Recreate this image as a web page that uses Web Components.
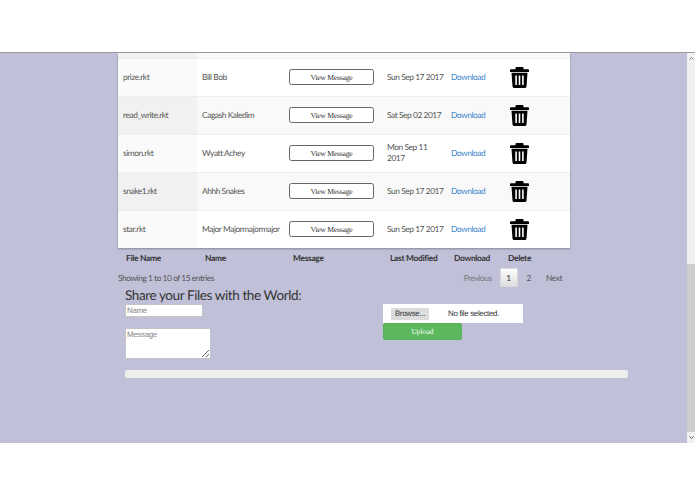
<!DOCTYPE html>
<html>
<head>
<meta charset="utf-8">
<title>Files</title>
<style>
  html, body { margin: 0; height: 100%; background: #fff; overflow: hidden; }
  body { font-family: Lato, "Open Sans", sans-serif; text-rendering: geometricPrecision; }
</style>
</head>
<body>
<app-shell>
  <file-table>
    <file-row slot="row" odd><span slot="file">prize.rkt</span><span slot="owner">Bill Bob</span><span slot="date">Sun Sep 17 2017</span></file-row>
    <file-row slot="row"><span slot="file">read_write.rkt</span><span slot="owner">Cagash Kaledim</span><span slot="date">Sat Sep 02 2017</span></file-row>
    <file-row slot="row" odd><span slot="file">simon.rkt</span><span slot="owner">Wyatt Achey</span><span slot="date">Mon Sep 11<br>2017</span></file-row>
    <file-row slot="row"><span slot="file">snake1.rkt</span><span slot="owner">Ahhh Snakes</span><span slot="date">Sun Sep 17 2017</span></file-row>
    <file-row slot="row" odd><span slot="file">star.rkt</span><span slot="owner">Major Majormajormajor</span><span slot="date">Sun Sep 17 2017</span></file-row>
  </file-table>
  <upload-form></upload-form>
</app-shell>

<script>
// columns are shared by the rows and the footer
const COLUMNS = '79px 88px 97px 64px 59px 65px';

const rowTemplate = document.createElement('template');
rowTemplate.innerHTML = `
  <style>
  :host {
    display: grid;
    grid-template-columns: ${COLUMNS};
    height: 38px;
    box-sizing: border-box;
    border-top: 1px solid #eeeeee;
    background: #f9f9f9;
    --first: #f1f1f1;
    font-size: 8.4px;
    letter-spacing: -.44px;
    line-height: 11px;
    color: #555;
  }
  :host([odd]) {
    background: #fff;
    --first: #fafafa;
  }
  .cell {
    display: flex;
    align-items: center;
    padding: 0 5px 1px;
  }
  .owner, .date { padding-right: 0; white-space: nowrap; }
  .msg { padding-left: 4px; }
  .file { background: var(--first); }
  button {
    width: 85px;
    height: 16px;
    padding: 0;
    flex: none;
    box-sizing: border-box;
    border: 1px solid #666;
    border-radius: 2.5px;
    background: #fff;
    color: #333;
    font: 7.7px "Liberation Serif", serif;
    letter-spacing: -.25px;
    text-rendering: geometricPrecision;
  }
  a { color: #3a85cc; text-decoration: none; }
  svg { display: block; width: 19px; height: 21px; flex: none; margin-top: 1px; }
  </style>
  <div class="cell file"><slot name="file"></slot></div>
  <div class="cell owner"><slot name="owner"></slot></div>
  <div class="cell msg"><button>View Message</button></div>
  <div class="cell date"><slot name="date"></slot></div>
  <div class="cell"><a href="#">Download</a></div>
  <div class="cell">
    <svg viewBox="0 0 19 21">
      <path fill="#000" d="M6.5 0h6a1 1 0 0 1 1 1v1.2h4.5a1 1 0 0 1 1 1V5H0V3.2a1 1 0 0 1 1-1h4.500V1a1 1 0 0 1 1-1z"/>
      <path fill="#000" fill-rule="evenodd" d="M1.500 5.800h16l-1 13.700a1.600 1.600 0 0 1-1.600 1.500H4.100a1.600 1.600 0 0 1-1.600-1.500zM5.300 8.500v9.500h1.600v-9.500zM8.700 8.500v9.500h1.600v-9.500zM12.100 8.500v9.500h1.600v-9.500z"/>
    </svg>
  </div>
`;

class FileRow extends HTMLElement {
  constructor () {
    super();
    this.attachShadow({mode: 'open'}).appendChild(rowTemplate.content.cloneNode(true));
  }
}
customElements.define('file-row', FileRow);

const tableTemplate = document.createElement('template');
tableTemplate.innerHTML = `
  <style>
  :host {
    display: block;
    width: 452px;
    margin-left: 118px;
  }
  .body {
    background: #fff;
    box-shadow: 0 1px 2px rgba(0, 0, 0, .3);
  }
  .sliver { height: 5px; display: flex; background: #f9f9f9; }
  .sliver div { width: 79px; background: #f1f1f1; }
  .foot {
    display: grid;
    grid-template-columns: ${COLUMNS};
    height: 20px;
    align-items: center;
    font-size: 8.4px;
    letter-spacing: -.3px;
    font-weight: 700;
    color: #333;
    white-space: nowrap;
  }
  .foot span { padding-left: 8px; }
  .foot .del { padding-left: 3px; }
  .info {
    display: flex;
    justify-content: space-between;
    align-items: center;
    height: 19px;
    font-size: 8.4px;
    letter-spacing: -.45px;
    color: #555;
  }
  </style>
  <div class="body">
    <div class="sliver"><div></div></div>
    <slot name="row"></slot>
  </div>
  <div class="foot">
    <span>File Name</span><span>Name</span><span>Message</span><span>Last Modified</span><span>Download</span><span class="del">Delete</span>
  </div>
  <div class="info">
    <span>Showing 1 to 10 of 15 entries</span>
    <data-pager></data-pager>
  </div>
`;

class FileTable extends HTMLElement {
  constructor () {
    super();
    this.attachShadow({mode: 'open'}).appendChild(tableTemplate.content.cloneNode(true));
  }
}
customElements.define('file-table', FileTable);

const pagerTemplate = document.createElement('template');
pagerTemplate.innerHTML = `
  <style>
  :host {
    display: flex;
    align-items: center;
    font-size: 8.4px;
    color: #555;
    padding-right: 8px;
  }
  .off { color: #777; margin-right: 8px; }
  .on {
    display: flex;
    align-items: center;
    justify-content: center;
    width: 18px;
    height: 19px;
    box-sizing: border-box;
    border: 1px solid #d8d8d8;
    background: linear-gradient(#fff, #dcdcdc);
    color: #333;
  }
  .n { margin: 0 15px 0 9px; }
  </style>
  <span class="off">Previous</span><span class="on">1</span><span class="n">2</span><span>Next</span>
`;

class DataPager extends HTMLElement {
  constructor () {
    super();
    this.attachShadow({mode: 'open'}).appendChild(pagerTemplate.content.cloneNode(true));
  }
}
customElements.define('data-pager', DataPager);

const formTemplate = document.createElement('template');
formTemplate.innerHTML = `
  <style>
  :host {
    display: block;
    margin-left: 125px;
    width: 503px;
  }
  h2 {
    margin: 0;
    font-size: 13.5px;
    letter-spacing: -.4px;
    line-height: 16px;
    font-weight: 400;
    color: #333;
  }
  .cols { display: flex; }
  .left { width: 258px; }
  input, textarea {
    display: block;
    box-sizing: border-box;
    margin: 0;
    padding: 1px;
    border: 1px solid #c4c4c4;
    background: #fff;
    font: 7.9px "Liberation Sans", sans-serif;
    letter-spacing: -.3px;
    text-rendering: geometricPrecision;
  }
  input::placeholder, textarea::placeholder { color: #888; }
  input { width: 78px; height: 13px; margin-top: 1px; }
  textarea { width: 86px; height: 31px; margin-top: 11px; }
  .file {
    display: flex;
    align-items: center;
    width: 140px;
    height: 19px;
    margin-top: 17px;
    box-sizing: border-box;
    padding-left: 8px;
    background: #fff;
    font: 7.9px "Liberation Sans", sans-serif;
    letter-spacing: -.3px;
    color: #333;
  }
  .browse {
    width: 38px;
    height: 12px;
    line-height: 12px;
    text-align: center;
    background: #dcdcdc;
    margin-right: 19px;
  }
  .upload {
    display: block;
    width: 79px;
    height: 17px;
    padding: 0;
    border: 1px solid #58b358;
    border-radius: 2px;
    background: #5cb85c;
    color: #fff;
    font: 7.5px "Liberation Serif", serif;
    text-rendering: geometricPrecision;
  }
  .progress {
    height: 8px;
    margin-top: 11px;
    border-radius: 2px;
    background: #eeeeee;
  }
  </style>
  <div class="cols">
    <div class="left">
      <h2>Share your Files with the World:</h2>
      <input placeholder="Name">
      <textarea placeholder="Message"></textarea>
    </div>
    <div>
      <div class="file"><span class="browse">Browse...</span><span>No file selected.</span></div>
      <button class="upload">Upload</button>
    </div>
  </div>
  <div class="progress"></div>
`;

class UploadForm extends HTMLElement {
  constructor () {
    super();
    this.attachShadow({mode: 'open'}).appendChild(formTemplate.content.cloneNode(true));
  }
}
customElements.define('upload-form', UploadForm);

const shellTemplate = document.createElement('template');
shellTemplate.innerHTML = `
  <style>
  :host {
    display: flex;
    flex-direction: column;
    height: 494px;
  }
  .band { height: 52px; background: #fff; flex: none; }
  .view {
    flex: 1;
    display: flex;
    min-height: 0;
    border-top: 1px solid #999;
    background: #c0c0d8;
  }
  .content { flex: 1; min-width: 0; }
  .bar {
    width: 8px;
    display: flex;
    flex-direction: column;
    background: #f1f1f1;
  }
  .arrow {
    height: 11px;
    display: flex;
    align-items: center;
    justify-content: center;
  }
  .gap { height: 200px; }
  .thumb { flex: 1; background: #cdcdcd; }
  .end { height: 51px; flex: none; background: #fff; }
  </style>
  <div class="band"></div>
  <div class="view">
    <div class="content"><slot></slot></div>
    <div class="bar">
      <div class="arrow"><svg width="5" height="3" viewBox="0 0 5 3"><path d="M.5 2.5l2-2 2 2" fill="none" stroke="#777"/></svg></div>
      <div class="gap"></div>
      <div class="thumb"></div>
      <div class="arrow"><svg width="5" height="3" viewBox="0 0 5 3"><path d="M.5 .5l2 2 2-2" fill="none" stroke="#555"/></svg></div>
    </div>
  </div>
  <div class="end"></div>
`;

class AppShell extends HTMLElement {
  constructor () {
    super();
    this.attachShadow({mode: 'open'}).appendChild(shellTemplate.content.cloneNode(true));
  }
}
customElements.define('app-shell', AppShell);
</script>
</body>
</html>
